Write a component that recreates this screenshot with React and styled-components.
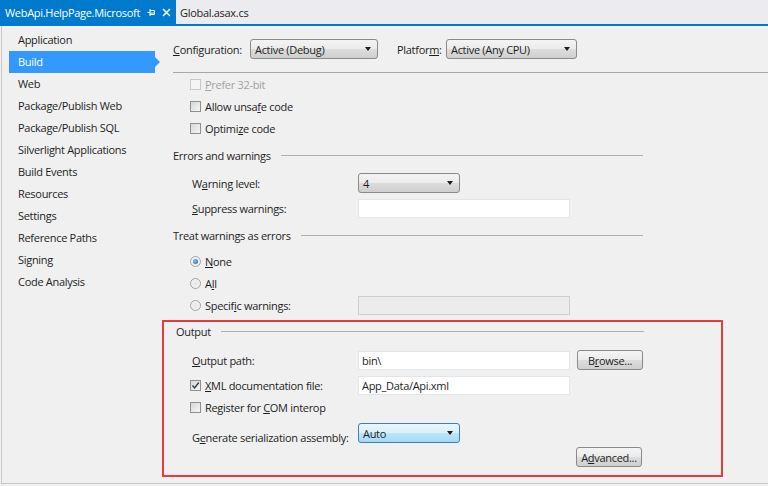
import styled, { createGlobalStyle } from "styled-components";

const GlobalStyle = createGlobalStyle`
  html, body {
    margin: 0;
    padding: 0;
    background: #f0f0f0;
  }
  body {
    font-family: "Open Sans", "Noto Sans", sans-serif;
    font-size: 11px;
    letter-spacing: -0.3px;
    color: #1e1e1e;
  }
  u {
    text-decoration-thickness: 1px;
    text-underline-offset: 1px;
  }
`;

const Window = styled.div`
  width: 768px;
  height: 486px;
  display: flex;
  flex-direction: column;
  overflow: hidden;
`;

const TabStrip = styled.div`
  height: 24px;
  flex: none;
  background: #ececf0;
  border-bottom: 2px solid #007acc;
  display: flex;
  align-items: stretch;
`;

const Tab = styled.div`
  display: flex;
  align-items: center;
  padding: 0 5px 0 ${(p) => (p.$active ? "5px" : "4px")};
  width: ${(p) => (p.$active ? "176px" : "auto")};
  box-sizing: border-box;
  background: ${(p) => (p.$active ? "#007acc" : "transparent")};
  color: ${(p) => (p.$active ? "#ffffff" : "#1e1e1e")};
  font-size: 11px;
  letter-spacing: -0.3px;
  white-space: nowrap;
`;

const TabTitle = styled.span`
  flex: 1;
`;

const TabIcon = styled.svg`
  width: 9px;
  height: 9px;
  margin-left: 6px;
  flex: none;
`;

const Body = styled.div`
  flex: none;
  height: 457px;
  margin-left: 1px;
  border-left: 1px solid #c8c8c8;
  border-bottom: 1px solid #c8c8c8;
  display: flex;
`;

const Sidebar = styled.ul`
  list-style: none;
  margin: 0;
  padding: 3px 0 0 0;
  width: 160px;
  flex: none;
`;

const NavItem = styled.li`
  position: relative;
  height: 22px;
  line-height: 22px;
  margin-left: 7px;
  width: 146px;
  padding-left: 9px;
  box-sizing: border-box;
  background: ${(p) => (p.$selected ? "#3399ff" : "transparent")};
  color: ${(p) => (p.$selected ? "#ffffff" : "#1e1e1e")};

  &::after {
    content: "";
    display: ${(p) => (p.$selected ? "block" : "none")};
    position: absolute;
    right: -5px;
    top: 6px;
    border-top: 5px solid transparent;
    border-bottom: 5px solid transparent;
    border-left: 5px solid #3399ff;
  }
`;

const Main = styled.div`
  flex: 1;
  padding: 12px 0 0 11px;
  display: flex;
  flex-direction: column;
`;

const ConfigRow = styled.div`
  height: 22px;
  display: flex;
  align-items: center;
`;

const ConfigLabel = styled.span`
  width: ${(p) => p.$w}px;
  flex: none;
`;

const Select = styled.div`
  width: ${(p) => p.$w}px;
  height: 20px;
  box-sizing: border-box;
  border: 1px solid ${(p) => (p.$hot ? "#3c7fb1" : "#8a8a8a")};
  border-radius: 3px;
  background: ${(p) =>
    p.$hot
      ? "linear-gradient(#eaf6fd, #d9f0fc 50%, #bee6fd 50%, #a7d9f5)"
      : "linear-gradient(#f4f4f4, #ebebeb 50%, #dddddd 50%, #cfcfcf)"};
  display: flex;
  align-items: center;
  padding: 0 6px 0 4px;
  margin-right: ${(p) => p.$mr || 0}px;
  flex: none;

  span {
    flex: 1;
  }
  &::after {
    content: "";
    border-left: 3px solid transparent;
    border-right: 3px solid transparent;
    border-top: 4px solid #1e1e1e;
  }
`;

const Rule = styled.div`
  height: 1px;
  background: #a8a8a8;
  margin-top: 12px;
`;

const CheckRow = styled.div`
  height: 22px;
  display: flex;
  align-items: center;
  padding-left: ${(p) => p.$pad ?? 17}px;
  margin-top: ${(p) => p.$mt || 0}px;
  color: ${(p) => (p.$disabled ? "#a2a2a2" : "#1e1e1e")};
  white-space: nowrap;
`;

const Box = styled.span`
  width: 11px;
  height: 11px;
  box-sizing: border-box;
  border: 1px solid ${(p) => (p.$disabled ? "#c9c9c9" : "#8e8f8f")};
  background: ${(p) =>
    p.$disabled ? "#f4f4f4" : "linear-gradient(135deg, #d7d7d7, #f6f6f6)"};
  margin-right: 4px;
  flex: none;
  display: flex;
  align-items: center;
  justify-content: center;
`;

const Radio = styled.span`
  width: 11px;
  height: 11px;
  box-sizing: border-box;
  border-radius: 50%;
  border: 1px solid #a3a3a3;
  background: radial-gradient(circle, #e6e6e6, #f7f7f7);
  margin-right: 4px;
  flex: none;
  display: flex;
  align-items: center;
  justify-content: center;

  &::after {
    content: "";
    display: ${(p) => (p.$on ? "block" : "none")};
    width: 5px;
    height: 5px;
    border-radius: 50%;
    background: radial-gradient(circle at 40% 40%, #8ac2f0, #1f5f9c);
  }
`;

const SectionHead = styled.div`
  width: ${(p) => p.$w || 470}px;
  height: ${(p) => p.$h || 22}px;
  margin-top: ${(p) => p.$mt || 0}px;
  display: flex;
  align-items: center;
  gap: 10px;
  white-space: nowrap;

  &::after {
    content: "";
    flex: 1;
    height: 1px;
    background: #b0b0b0;
  }
`;

const Field = styled.div`
  height: 22px;
  display: flex;
  align-items: center;
  padding-left: ${(p) => p.$pad ?? 19}px;
  margin-top: ${(p) => p.$mt || 0}px;
  white-space: nowrap;
`;

const FieldLabel = styled.span`
  width: ${(p) => p.$w || 166}px;
  flex: none;
  display: flex;
  align-items: center;
  white-space: pre;
  padding-top: ${(p) => p.$dy || 0}px;
`;

const TextBox = styled.div`
  width: 212px;
  height: 19px;
  box-sizing: border-box;
  border: 1px solid ${(p) => (p.$disabled ? "#cfcfcf" : "#e2e6ea")};
  background: ${(p) => (p.$disabled ? "#ececec" : "#ffffff")};
  padding: 0 3px;
  line-height: 17px;
  flex: none;
`;

const Button = styled.div`
  width: 66px;
  height: 20px;
  box-sizing: border-box;
  border: 1px solid #8a8a8a;
  border-radius: 3px;
  background: linear-gradient(#f4f4f4, #ebebeb 50%, #dddddd 50%, #cfcfcf);
  display: flex;
  align-items: center;
  justify-content: center;
  margin-left: ${(p) => p.$ml || 0}px;
  flex: none;
`;

const OutputBox = styled.div`
  margin: 4px 0 0 -11px;
  width: 561px;
  height: 157px;
  box-sizing: border-box;
  border: 2px solid #e53d3d;
  padding: 0 0 0 12px;
  display: flex;
  flex-direction: column;
`;

const ButtonRow = styled.div`
  width: 466px;
  margin-top: 3px;
  display: flex;
  justify-content: flex-end;
`;

const Check = () => (
  <svg width="9" height="9" viewBox="0 0 9 9">
    <path d="M1.5 4.5 L3.6 7 L7.8 1.5" fill="none" stroke="#3a3a3a" strokeWidth="1.4" />
  </svg>
);

const navItems = [
  "Application",
  "Build",
  "Web",
  "Package/Publish Web",
  "Package/Publish SQL",
  "Silverlight Applications",
  "Build Events",
  "Resources",
  "Settings",
  "Reference Paths",
  "Signing",
  "Code Analysis",
];

export default function App() {
  return (
    <Window>
      <GlobalStyle />
      <TabStrip>
        <Tab $active>
          <TabTitle>WebApi.HelpPage.Microsoft</TabTitle>
          <TabIcon viewBox="0 0 9 9">
            <path d="M0.5 4.5 H3 M3 1 V8 M3 2.5 H7.5 V6.5 H3 M3 5 H7.5" stroke="#ffffff" strokeWidth="1" fill="none" />
          </TabIcon>
          <TabIcon viewBox="0 0 9 9">
            <path d="M1 1 L8 8 M8 1 L1 8" stroke="#ffffff" strokeWidth="1.5" />
          </TabIcon>
        </Tab>
        <Tab>Global.asax.cs</Tab>
      </TabStrip>

      <Body>
        <Sidebar>
          {navItems.map((n) => (
            <NavItem key={n} $selected={n === "Build"}>
              {n}
            </NavItem>
          ))}
        </Sidebar>

        <Main>
          <ConfigRow>
            <ConfigLabel $w={77}>
              <u>C</u>onfiguration:
            </ConfigLabel>
            <Select $w={128} $mr={19}>
              <span>Active (Debug)</span>
            </Select>
            <ConfigLabel $w={49}>
              Platfor<u>m</u>:
            </ConfigLabel>
            <Select $w={131}>
              <span>Active (Any CPU)</span>
            </Select>
          </ConfigRow>
          <Rule />

          <CheckRow $disabled>
            <Box $disabled />
            <span>
              <u>P</u>refer 32-bit
            </span>
          </CheckRow>
          <CheckRow>
            <Box />
            <span>
              Allow unsa<u>f</u>e code
            </span>
          </CheckRow>
          <CheckRow>
            <Box />
            <span>
              Optimi<u>z</u>e code
            </span>
          </CheckRow>

          <SectionHead $mt={5}>Errors and warnings</SectionHead>
          <Field $mt={6}>
            <FieldLabel>
              <span>
                W<u>a</u>rning level:
              </span>
            </FieldLabel>
            <Select $w={102}>
              <span>4</span>
            </Select>
          </Field>
          <Field $mt={3}>
            <FieldLabel>
              <span>
                <u>S</u>uppress warnings:
              </span>
            </FieldLabel>
            <TextBox />
          </Field>

          <SectionHead $mt={5}>Treat warnings as errors</SectionHead>
          <CheckRow $mt={4}>
            <Radio $on />
            <span>
              <u>N</u>one
            </span>
          </CheckRow>
          <CheckRow>
            <Radio />
            <span>
              A<u>l</u>l
            </span>
          </CheckRow>
          <Field $pad={17}>
            <FieldLabel $w={168}>
              <Radio />
              <span>
                Specif<u>i</u>c warnings:
              </span>
            </FieldLabel>
            <TextBox $disabled />
          </Field>

          <OutputBox>
            <SectionHead $w={468} $h={19}>
              Output
            </SectionHead>
            <Field $mt={8} $pad={16}>
              <FieldLabel>
                <span>
                  <u>O</u>utput path:
                </span>
              </FieldLabel>
              <TextBox>bin\</TextBox>
              <Button $ml={7}>
                <span>
                  B<u>r</u>owse...
                </span>
              </Button>
            </Field>
            <CheckRow $pad={14} $mt={3}>
              <FieldLabel $w={168}>
                <Box>
                  <Check />
                </Box>
                <span>
                  <u>X</u>ML documentation file:
                </span>
              </FieldLabel>
              <TextBox>App_Data/Api.xml</TextBox>
            </CheckRow>
            <CheckRow $pad={14}>
              <Box />
              <span>
                Register for <u>C</u>OM interop
              </span>
            </CheckRow>
            <Field $mt={4} $pad={16}>
              <FieldLabel $dy={8}>
                <span>
                  G<u>e</u>nerate serialization assembly:
                </span>
              </FieldLabel>
              <Select $w={102} $hot>
                <span>Auto</span>
              </Select>
            </Field>
            <ButtonRow>
              <Button>
                <span>
                  A<u>d</u>vanced...
                </span>
              </Button>
            </ButtonRow>
          </OutputBox>
        </Main>
      </Body>
    </Window>
  );
}
